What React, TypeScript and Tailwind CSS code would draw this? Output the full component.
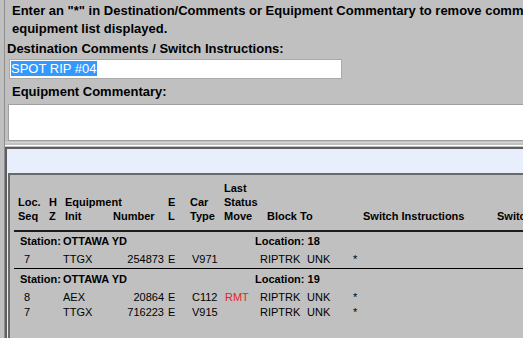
import React from 'react';

type Car = { seq: string; init: string; num: string; el: string; type: string; move?: string; block: string; zone: string; sw: string };

const groups: { station: string; loc: string; cars: Car[] }[] = [
  {
    station: 'OTTAWA YD',
    loc: '18',
    cars: [{ seq: '7', init: 'TTGX', num: '254873', el: 'E', type: 'V971', block: 'RIPTRK', zone: 'UNK', sw: '*' }],
  },
  {
    station: 'OTTAWA YD',
    loc: '19',
    cars: [
      { seq: '8', init: 'AEX', num: '20864', el: 'E', type: 'C112', move: 'RMT', block: 'RIPTRK', zone: 'UNK', sw: '*' },
      { seq: '7', init: 'TTGX', num: '716223', el: 'E', type: 'V915', block: 'RIPTRK', zone: 'UNK', sw: '*' },
    ],
  },
];

const Header: React.FC = () => (
  <div className="flex items-end font-bold text-[11px] leading-[14px] whitespace-nowrap">
    <div className="w-[35px] shrink-0 pl-[4px]">Loc.<br />Seq</div>
    <div className="w-[16px] shrink-0">H<br />Z</div>
    <div className="w-[48px] shrink-0">Equipment<br />Init</div>
    <div className="w-[55px] shrink-0">Number</div>
    <div className="w-[22px] shrink-0">E<br />L</div>
    <div className="w-[34px] shrink-0">Car<br />Type</div>
    <div className="w-[43px] shrink-0">Last<br />Status<br />Move</div>
    <div className="w-[96px] shrink-0">Block To</div>
    <div className="w-[134px] shrink-0">Switch Instructions</div>
    <div className="shrink-0">Switch</div>
  </div>
);

const CarRow: React.FC<{ car: Car }> = ({ car }) => (
  <div className="flex text-[11px] leading-[15px] whitespace-nowrap">
    <div className="w-[49px] shrink-0 pl-[10px]">{car.seq}</div>
    <div className="w-[60px] shrink-0">{car.init}</div>
    <div className="w-[41px] shrink-0 text-right">{car.num}</div>
    <div className="w-[28px] shrink-0 pl-[4px]">{car.el}</div>
    <div className="w-[33px] shrink-0">{car.type}</div>
    <div className="w-[35px] shrink-0 text-[#e8202a]">{car.move}</div>
    <div className="w-[47px] shrink-0">{car.block}</div>
    <div className="w-[46px] shrink-0">{car.zone}</div>
    <div className="shrink-0">{car.sw}</div>
  </div>
);

export default function App() {
  return (
    <div className="w-[523px] h-[338px] overflow-hidden bg-[#c0c0c0] text-black font-['Liberation_Sans',Arial,sans-serif]">
      <div className="ml-[4px] border-l border-[#8e8e8e] h-full flex flex-col">
        {/* instructions + comment fields */}
        <div className="h-[142px] shrink-0 pt-[2px] text-[13px] font-bold leading-[18px] whitespace-nowrap overflow-hidden">
          <div className="pl-[7px]">Enter an "*" in Destination/Comments or Equipment Commentary to remove comments</div>
          <div className="pl-[7px]">equipment list displayed.</div>
          <div className="mt-[2px] pl-[2px]">Destination Comments / Switch Instructions:</div>
          <div className="mt-[1px] ml-[4px] w-[333px] h-[20px] bg-white border border-[#a9a9a9] pl-[1px] pt-[1px] font-normal text-[13px] leading-[15px]">
            <span className="bg-[#3399ff] text-white">SPOT RIP #04</span>
          </div>
          <div className="mt-[4px] pl-[7px]">Equipment Commentary:</div>
          <div className="mt-[3px] ml-[3px] w-[600px] h-[37px] bg-white border border-[#a0a0a0]" />
        </div>

        <div className="h-[1px] bg-[#d6d6d6] shrink-0" />
        <div className="h-[2px] shrink-0" />
        <div className="h-[1px] bg-white shrink-0" />
        <div className="h-[1px] shrink-0" />

        {/* result panel */}
        <div className="flex-1 border-t-2 border-l-2 border-[#5e5e5e] bg-[#e8eefc] flex flex-col">
          <div className="h-[24px] shrink-0" />
          <div className="flex-1 ml-[1px] border-t-2 border-l-2 border-[#6a6a6a] bg-[#c0c0c0] pl-[4px] pt-[6px]">
            <Header />
            <div className="mt-[7px] h-[2px] bg-[#1c1c1c]" />
            {groups.map((g, gi) => (
              <div key={gi}>
                {gi > 0 && <div className="my-[1px] h-[1px] bg-black" />}
                <div className="flex pt-[2px] pb-[4px] text-[11px] leading-[14px] font-bold whitespace-nowrap">
                  <div className="w-[49px] shrink-0 pl-[6px]">Station:</div>
                  <div className="w-[192px] shrink-0">{g.station}</div>
                  <div>Location: {g.loc}</div>
                </div>
                {g.cars.map((c, ci) => (
                  <CarRow key={ci} car={c} />
                ))}
              </div>
            ))}
          </div>
        </div>
      </div>
    </div>
  );
}
